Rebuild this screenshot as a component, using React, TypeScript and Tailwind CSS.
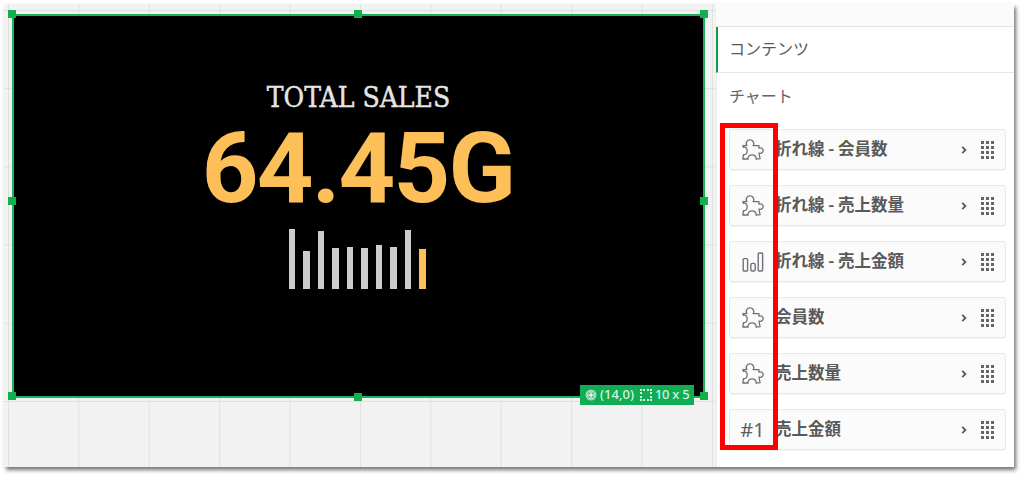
import React from "react";

const bars = [60, 38, 58, 41, 42, 41, 44, 42, 59, 40];
const rows = [
  { icon: "puzzle", label: "折れ線 - 会員数" },
  { icon: "puzzle", label: "折れ線 - 売上数量" },
  { icon: "bars", label: "折れ線 - 売上金額" },
  { icon: "puzzle", label: "会員数" },
  { icon: "puzzle", label: "売上数量" },
  { icon: "hash", label: "売上金額" },
];

function PuzzleIcon() {
  return (
    <svg width="22" height="22" viewBox="0 0 22 22" fill="none" stroke="#6f6f78" strokeWidth="1.3" strokeLinejoin="round">
      <path d="M.8 6.7H4.8C3.4 3.6 5 .8 8 .8s4.6 2.8 3.2 5.9H17V9.2C19 8.4 21.2 9.4 21.2 11.6s-2.2 3.2-4.2 2.4L18 19.6 14 20C14.6 17.8 12.6 15.8 10 15.8S5.6 17.8 6.2 20L.8 20 1.4 15.6C3.4 16.2 5.2 14.4 5.2 11.8S3.4 7.6 1.4 8.4z" />
    </svg>
  );
}

function BarsIcon() {
  return (
    <svg width="22" height="20" viewBox="0 0 22 20" fill="none" stroke="#6f6f78" strokeWidth="1.4">
      <rect x="1.2" y="6.6" width="4.4" height="12.4" rx="1" />
      <rect x="8.8" y="11.4" width="4.4" height="7.6" rx="1.5" />
      <rect x="16.2" y="1" width="4.4" height="18" rx="1" />
    </svg>
  );
}

function DotsIcon() {
  return (
    <div className="grid grid-cols-3 gap-[2px]">
      {Array.from({ length: 12 }).map((_, i) => (
        <span key={i} className="h-[3px] w-[3px] bg-[#666666]" />
      ))}
    </div>
  );
}

export default function App() {
  return (
    <div className="relative h-[480px] w-[1027px] overflow-hidden bg-white font-['Noto_Sans_CJK_JP','Noto_Sans',sans-serif]">
      <div className="ml-[4px] mt-[4px] flex h-[463px] w-[1010px] shadow-[2px_3px_4px_rgba(0,0,0,0.55)]">
        <div className="relative h-full w-[712px] bg-[#f2f2f2] bg-[linear-gradient(to_right,#e0e0e0_1px,transparent_1px),linear-gradient(to_bottom,#e0e0e0_1px,transparent_1px)] bg-[size:70.4px_78.2px] bg-[position:4px_6px]">
          <div className="ml-[8px] mt-[10px] flex h-[384px] w-[693px] flex-col items-center border-2 border-[#18b45b] bg-black pt-[65px]">
            <div className="font-['DejaVu_Serif',serif] text-[28px] leading-[34px] text-[#e6e6e6] [font-stretch:condensed] [-webkit-text-stroke:0.4px_#e6e6e6]">TOTAL SALES</div>
            <div className="-ml-[1px] mt-[9px] font-['Roboto',sans-serif] text-[99px] font-bold leading-[88px] tracking-[-1.8px] text-[#fdbf57]">64.45G</div>
            <div className="-ml-[3px] mt-[16px] flex h-[61px] items-end gap-[8px]">
              {bars.map((h, i) => (
                <div key={i} style={{ height: h }} className={`w-[6.5px] ${i === 9 ? "bg-[#fdbf57]" : "bg-[#cccccc]"}`} />
              ))}
            </div>
          </div>
          {/* selection handles */}
          <span className="absolute left-[4px] top-[6px] h-[8px] w-[8px] bg-[#10b04f]" />
          <span className="absolute left-[350px] top-[6px] h-[8px] w-[8px] bg-[#10b04f]" />
          <span className="absolute left-[696px] top-[6px] h-[8px] w-[8px] bg-[#10b04f]" />
          <span className="absolute left-[4px] top-[193px] h-[8px] w-[8px] bg-[#10b04f]" />
          <span className="absolute left-[696px] top-[193px] h-[8px] w-[8px] bg-[#10b04f]" />
          <span className="absolute left-[4px] top-[388px] h-[8px] w-[8px] bg-[#10b04f]" />
          <span className="absolute left-[350px] top-[389px] h-[8px] w-[8px] bg-[#10b04f]" />
          <span className="absolute left-[696px] top-[388px] h-[8px] w-[8px] bg-[#10b04f]" />
          {/* position badge */}
          <div className="absolute left-[576px] top-[381px] flex h-[20px] w-[114px] items-center bg-[#10ad55] pl-[5px] font-['Noto_Sans',sans-serif] text-[13px] font-medium text-[#d3f3e0]">
            <svg width="12" height="12" viewBox="0 0 12 12" className="shrink-0">
              <circle cx="6" cy="6" r="5.5" fill="#9fdcb8" />
              <path d="M3.5 3.5l5 5M8.5 3.5l-5 5" stroke="#10ad55" strokeWidth="1" />
              <circle cx="6" cy="6" r="1.6" fill="#e8f7ee" />
            </svg>
            <span className="ml-[3px]">(14,0)</span>
            <span className="ml-[6px] h-[12px] w-[12px] shrink-0 border-2 border-dotted border-[#d3f3e0]" />
            <span className="ml-[3px] tracking-[-0.3px]">10 x 5</span>
          </div>
        </div>
        <div className="flex h-full w-[298px] flex-col bg-white text-[#595959]">
          <div className="h-[23px] border-b border-[#e6e6e6] bg-[#fbfbfb]" />
          <div className="flex h-[46px] items-center border-b border-[#e6e6e6] border-l-2 border-l-[#0f9d4b] pl-[11px] pb-[4px] text-[16px] font-normal">コンテンツ</div>
          <div className="flex min-h-0 flex-1 flex-col border-l border-[#ececec]">
            <div className="flex h-[45px] items-center pb-[2px] pl-[12px] text-[16px] text-[#666666]">チャート</div>
            <div className="flex flex-col gap-[15px] pl-[12px] pr-[8px] pt-[11px]">
              {rows.map((r) => (
                <div key={r.label} className="flex h-[41px] items-center rounded-[3px] border border-[#e8e8e8] bg-[#fbfbfb] shadow-[0_1px_1px_rgba(0,0,0,0.05)]">
                  <div className="flex w-[45px] shrink-0 items-center justify-center">
                    {r.icon === "puzzle" && <PuzzleIcon />}
                    {r.icon === "bars" && <BarsIcon />}
                    {r.icon === "hash" && <span className="font-['Noto_Sans',sans-serif] text-[20px] font-normal text-[#5f5f68]">#1</span>}
                  </div>
                  <span className="flex-1 truncate pb-[2px] text-[16.5px] font-bold text-[#595959]">{r.label}</span>
                  <svg width="8" height="10" viewBox="0 0 8 10" fill="none" stroke="#595959" strokeWidth="1.8" className="mr-[13px]">
                    <path d="M2.2 1.8L5.4 5 2.2 8.2" />
                  </svg>
                  <div className="mr-[11px]"><DotsIcon /></div>
                </div>
              ))}
            </div>
          </div>
        </div>
      </div>
      {/* red annotation */}
      <div className="absolute left-[720px] top-[123px] h-[327px] w-[58px] border-[5px] border-[#ff0000]" />
    </div>
  );
}
